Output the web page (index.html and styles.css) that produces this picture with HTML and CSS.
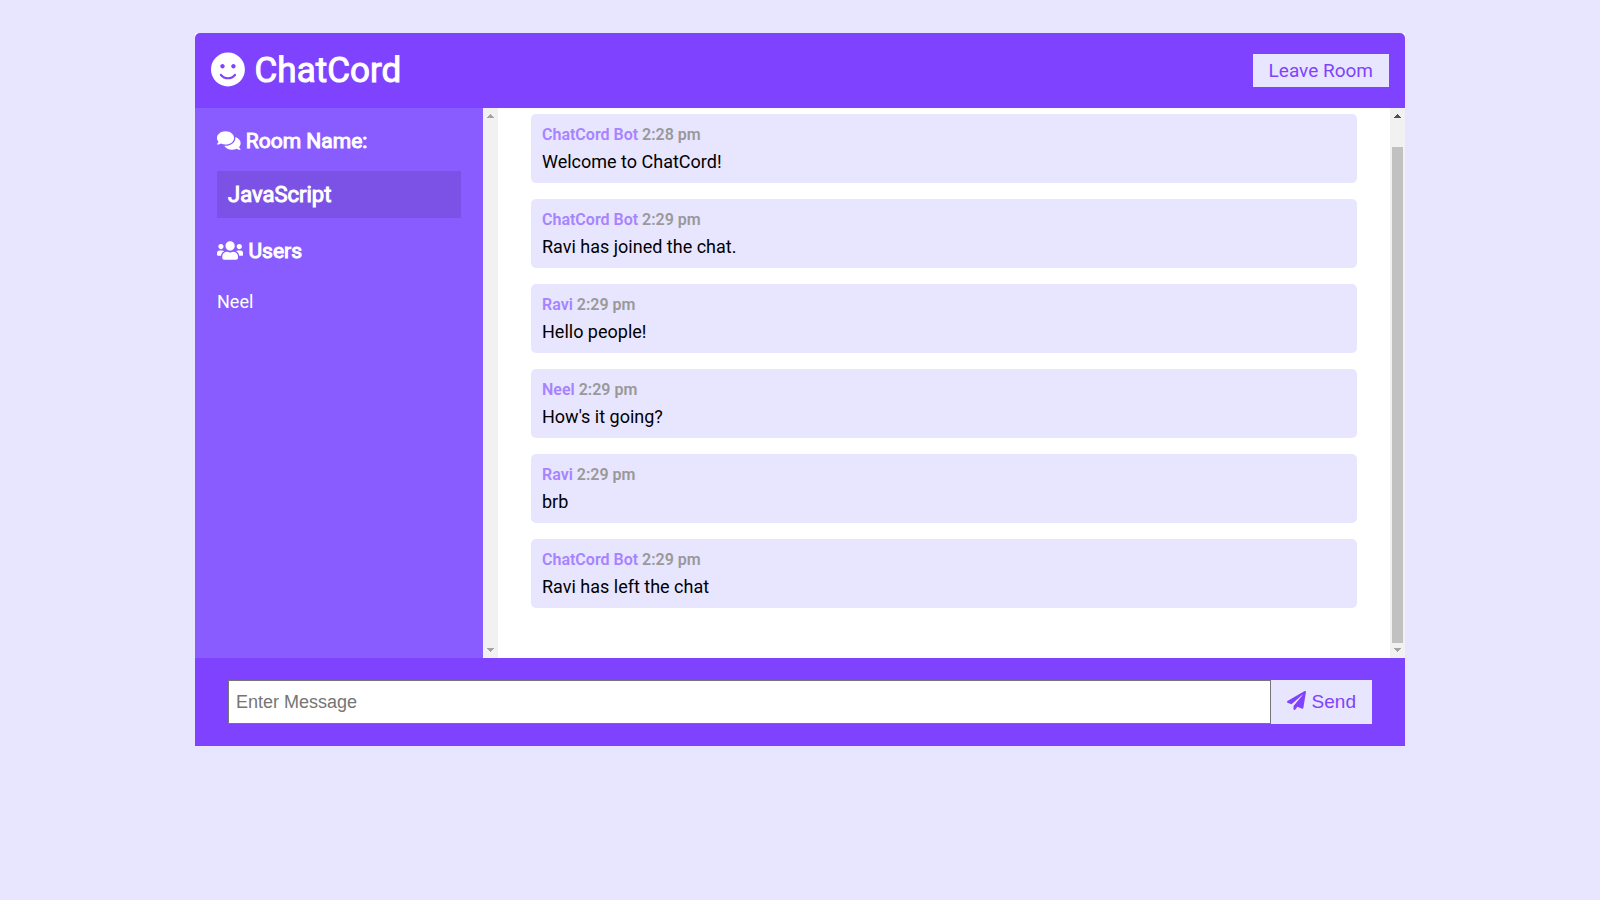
FILE: index.html
```html
<!DOCTYPE html>
<html lang="en">
<head>
<meta charset="utf-8">
<meta name="viewport" content="width=device-width, initial-scale=1">
<title>ChatCord App</title>
<link rel="stylesheet" href="styles.css">
</head>
<body>
<div class="chat-container">
  <header class="chat-header">
    <h1 class="brand"><svg class="icon icon-smile" viewBox="0 0 496 512" aria-hidden="true"><path d="M248 8C111 8 0 119 0 256s111 248 248 248 248-111 248-248S385 8 248 8zm80 168c17.7 0 32 14.3 32 32s-14.3 32-32 32-32-14.3-32-32 14.3-32 32-32zm-160 0c17.7 0 32 14.3 32 32s-14.3 32-32 32-32-14.3-32-32 14.3-32 32-32zm194.8 170.2C334.3 380.4 292.5 400 248 400s-86.3-19.6-114.8-53.8c-13.6-16.3 11-36.7 24.6-20.5 22.4 26.9 55.2 42.2 90.2 42.2s67.8-15.4 90.2-42.2c13.4-16.2 38.1 4.2 24.6 20.5z"/></svg> ChatCord</h1>
    <a class="btn" href="#leave">Leave Room</a>
  </header>
  <main class="chat-main">
    <aside class="chat-sidebar">
      <h3 class="side-title"><svg class="icon icon-comments" viewBox="0 0 576 512" aria-hidden="true"><path d="M416 192c0-88.4-93.1-160-208-160S0 103.6 0 192c0 34.3 14.1 65.9 38 92-13.4 30.2-35.5 54.2-35.8 54.5-2.2 2.3-2.8 5.7-1.5 8.7S4.8 352 8 352c36.6 0 66.9-12.3 88.7-25 32.2 15.7 70.3 25 111.3 25 114.9 0 208-71.6 208-160zm122 220c23.9-26 38-57.7 38-92 0-66.9-53.5-124.2-129.3-148.1.9 6.6 1.3 13.3 1.3 20.1 0 105.9-107.7 192-240 192-10.8 0-21.3-.8-31.7-1.9C207.8 439.6 281.8 480 368 480c41 0 79.1-9.2 111.3-25 21.8 12.7 52.1 25 88.7 25 3.2 0 6.1-1.9 7.3-4.8 1.3-2.9.7-6.3-1.5-8.7-.3-.3-22.4-24.2-35.8-54.5z"/></svg> Room Name:</h3>
      <h2 class="room-name">JavaScript</h2>
      <h3 class="side-title"><svg class="icon icon-users" viewBox="0 0 640 512" aria-hidden="true"><path d="M96 224c35.3 0 64-28.7 64-64s-28.7-64-64-64-64 28.7-64 64 28.7 64 64 64zm448 0c35.3 0 64-28.7 64-64s-28.7-64-64-64-64 28.7-64 64 28.7 64 64 64zm32 32h-64c-17.6 0-33.5 7.1-45.1 18.6 40.3 22.1 68.9 62 75.1 109.4h66c17.7 0 32-14.3 32-32v-32c0-35.3-28.7-64-64-64zm-256 0c61.9 0 112-50.1 112-112S381.9 32 320 32 208 82.1 208 144s50.1 112 112 112zm76.8 32h-8.3c-20.8 10-43.9 16-68.5 16s-47.6-6-68.5-16h-8.3C179.6 288 128 339.6 128 403.2V432c0 26.5 21.5 48 48 48h288c26.5 0 48-21.5 48-48v-28.8c0-63.6-51.6-115.2-115.2-115.2zm-223.7-13.4C161.5 263.1 145.6 256 128 256H64c-35.3 0-64 28.7-64 64v32c0 17.7 14.3 32 32 32h65.9c6.3-47.4 34.9-87.3 75.2-109.4z"/></svg> Users</h3>
      <ul class="users">
        <li>Neel</li>
      </ul>
    </aside>
    <div class="scrollbar" aria-hidden="true">
      <svg class="arrow" viewBox="0 0 7 4"><path d="M3 0h1v1h1v1h1v1h1v1H0V3h1V2h1V1h1z"/></svg>
      <svg class="arrow" viewBox="0 0 7 4"><path d="M0 0h7v1H6v1H5v1H4v1H3V3H2V2H1V1H0z"/></svg>
    </div>
    <section class="chat-messages">
      <article class="message">
        <p class="meta">ChatCord Bot <span>2:28 pm</span></p>
        <p class="text">Welcome to ChatCord!</p>
      </article>
      <article class="message">
        <p class="meta">ChatCord Bot <span>2:29 pm</span></p>
        <p class="text">Ravi has joined the chat.</p>
      </article>
      <article class="message">
        <p class="meta">Ravi <span>2:29 pm</span></p>
        <p class="text">Hello people!</p>
      </article>
      <article class="message">
        <p class="meta">Neel <span>2:29 pm</span></p>
        <p class="text">How's it going?</p>
      </article>
      <article class="message">
        <p class="meta">Ravi <span>2:29 pm</span></p>
        <p class="text">brb</p>
      </article>
      <article class="message">
        <p class="meta">ChatCord Bot <span>2:29 pm</span></p>
        <p class="text">Ravi has left the chat</p>
      </article>
    </section>
    <div class="scrollbar" aria-hidden="true">
      <svg class="arrow arrow-active" viewBox="0 0 7 4"><path d="M3 0h1v1h1v1h1v1h1v1H0V3h1V2h1V1h1z"/></svg>
      <div class="thumb"></div>
      <svg class="arrow" viewBox="0 0 7 4"><path d="M0 0h7v1H6v1H5v1H4v1H3V3H2V2H1V1H0z"/></svg>
    </div>
  </main>
  <form class="chat-form">
    <input class="msg" type="text" placeholder="Enter Message" aria-label="Message" autocomplete="off">
    <button class="btn btn-send" type="button"><svg class="icon icon-plane" viewBox="0 0 512 512" aria-hidden="true"><path d="M476 3.2L12.5 270.6c-18.1 10.4-15.8 35.6 2.2 43.2L121 358.4l287.3-253.2c5.5-4.9 13.3 2.6 8.6 8.3L176 407v80.5c0 23.6 28.5 32.9 42.5 15.8L282 426l124.6 52.2c14.2 6 30.4-2.9 33-18.2l72-432C515 7.8 493.3-6.8 476 3.2z"/></svg> Send</button>
  </form>
</div>
</body>
</html>
```

FILE: styles.css
```css
* {
  box-sizing: border-box;
  margin: 0;
  padding: 0;
}

body {
  padding: 33px 22px;
  background: #e8e5ff;
  color: #000;
  font-family: Roboto, "Liberation Sans", sans-serif;
  font-size: 18px;
}

.chat-container {
  max-width: 1210px;
  margin: 0 auto;
  background: #fff;
}

.icon {
  height: 1em;
  fill: currentColor;
  vertical-align: -0.125em;
}

/* Headings use the regular face, thickened by a stroke */
.brand,
.side-title,
.room-name {
  font-weight: 400;
  -webkit-text-stroke: 1px currentColor;
}

.chat-header {
  display: flex;
  align-items: center;
  justify-content: space-between;
  padding: 11px 16px;
  border-radius: 5px 5px 0 0;
  background: #7f42ff;
  color: #fff;
}

.brand {
  padding-top: 1px;
  font-size: 35px;
  line-height: 52px;
}

.icon-smile {
  margin-right: 1px;
  vertical-align: -5px;
}

.btn {
  padding: 5px 16px;
  border: 0;
  background: #e8e5ff;
  color: #7f42ff;
  font-size: 19px;
  line-height: 23px;
  text-decoration: none;
  cursor: pointer;
}

.chat-main {
  display: flex;
  min-height: 550px;
}

.chat-sidebar {
  flex: 0 0 288px;
  padding: 22px;
  background: #895cff;
  color: #fff;
}

.side-title {
  margin-bottom: 18px;
  font-size: 21px;
  line-height: 23px;
}

.room-name {
  margin-bottom: 22px;
  padding: 11px;
  background: #7b52e5;
  font-size: 22px;
  line-height: 25px;
}

.users {
  padding-top: 9px;
  line-height: 22px;
  list-style: none;
}

.scrollbar {
  display: flex;
  flex: 0 0 15px;
  flex-direction: column;
  align-items: center;
  justify-content: space-between;
  padding: 6px 0;
  background: #f1f1f1;
}

.arrow {
  width: 7px;
  height: 4px;
  fill: #a3a3a3;
}

.arrow-active {
  fill: #505050;
}

.thumb {
  flex: 1;
  width: 11px;
  margin: 29px 0 5px;
  background: #c1c1c1;
}

.chat-messages {
  flex: 1;
  padding: 6px 33px 33px;
}

.message {
  margin-bottom: 16px;
  padding: 10px 11px 9px;
  border-radius: 5px;
  background: #e8e5ff;
}

.meta {
  margin-bottom: 4px;
  color: #a683ff;
  font-size: 16px;
  font-weight: 600;
  line-height: 22px;
}

.meta span {
  color: #999;
}

.text {
  line-height: 24px;
}

.chat-form {
  display: flex;
  padding: 22px 33px;
  background: #7f42ff;
}

.msg {
  flex: 1;
  height: 44px;
  padding: 0 7px;
  border: 1px solid #767676;
  background: #fff;
  font-family: "Liberation Sans", Arial, sans-serif;
  font-size: 18px;
}

.msg::placeholder {
  color: #757575;
}

.btn-send {
  padding-bottom: 6px;
  font-family: "Liberation Sans", Arial, sans-serif;
}
```
